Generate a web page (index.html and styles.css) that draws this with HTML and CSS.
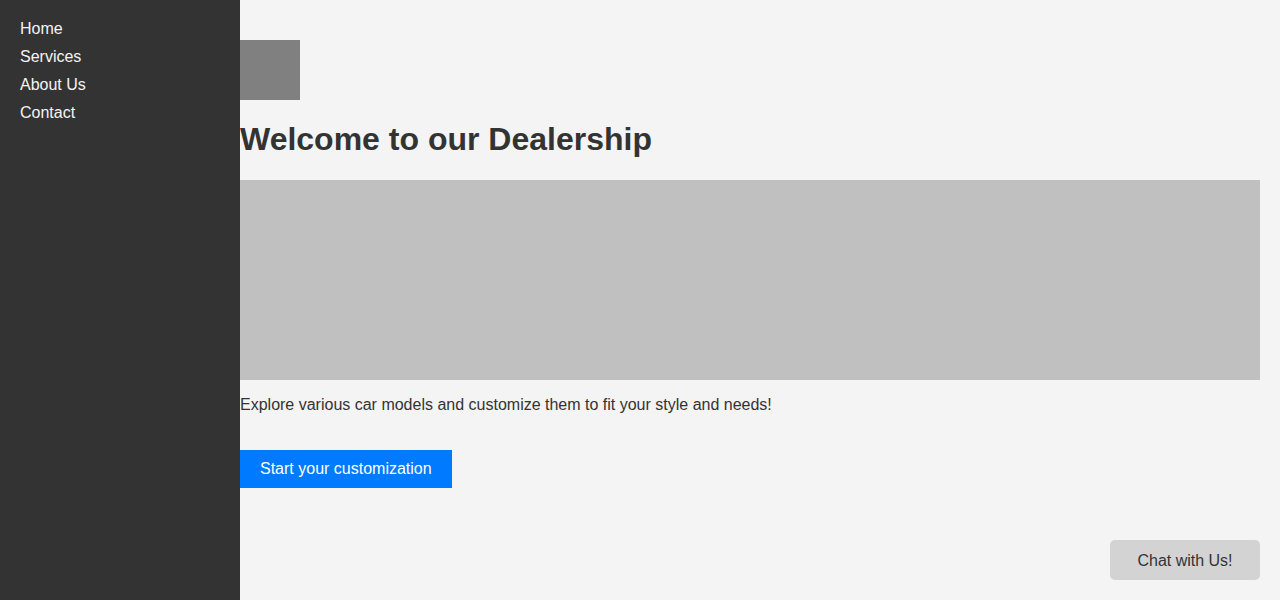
FILE: index.html
```html
<!DOCTYPE html>
<html lang="en">
<head>
<meta charset="utf-8">
<title>Dealership</title>
<link rel="stylesheet" href="styles.css">
</head>
<body>
<nav class="sidebar">
  <ul class="nav-list">
    <li><a href="#">Home</a></li>
    <li><a href="#">Services</a></li>
    <li><a href="#">About Us</a></li>
    <li><a href="#">Contact</a></li>
  </ul>
</nav>
<main class="main">
  <div class="logo"></div>
  <h1 class="title">Welcome to our Dealership</h1>
  <div class="hero"></div>
  <p class="intro">Explore various car models and customize them to fit your style and needs!</p>
  <button class="cta">Start your customization</button>
</main>
<button class="chat">Chat with Us!</button>
</body>
</html>
```
FILE: styles.css
```css
html, body {
  margin: 0;
  padding: 0;
}
body {
  background: #f4f4f4;
  color: #333;
  font-family: "Liberation Sans", Arial, sans-serif;
  font-size: 16px;
}
.sidebar {
  position: fixed;
  top: 0;
  left: 0;
  bottom: 0;
  width: 240px;
  background: #333;
  box-sizing: border-box;
  padding: 15px 20px;
}
.nav-list {
  list-style: none;
  margin: 0;
  padding: 0;
}
.nav-list li {
  padding: 5px 0;
  line-height: 18px;
}
.nav-list a {
  color: #f4f4f4;
  text-decoration: none;
}
.main {
  margin-left: 240px;
  padding: 40px 20px 0 0;
}
.logo {
  width: 60px;
  height: 60px;
  background: #808080;
}
.title {
  font-size: 32px;
  font-weight: bold;
  margin: 21.44px 0;
  line-height: 37px;
}
.hero {
  height: 200px;
  background: #c0c0c0;
}
.intro {
  margin: 16px 0 36px;
  line-height: 18px;
}
.cta {
  display: block;
  border: none;
  background: #007bff;
  color: #fff;
  font-family: inherit;
  font-size: 16px;
  line-height: 18px;
  padding: 10px 20px;
  cursor: pointer;
}
.chat {
  position: fixed;
  right: 20px;
  bottom: 20px;
  width: 150px;
  height: 40px;
  padding: 1px 0 0;
  border: none;
  border-radius: 5px;
  background: #d3d3d3;
  color: #333;
  font-family: inherit;
  font-size: 16px;
  cursor: pointer;
}
```
